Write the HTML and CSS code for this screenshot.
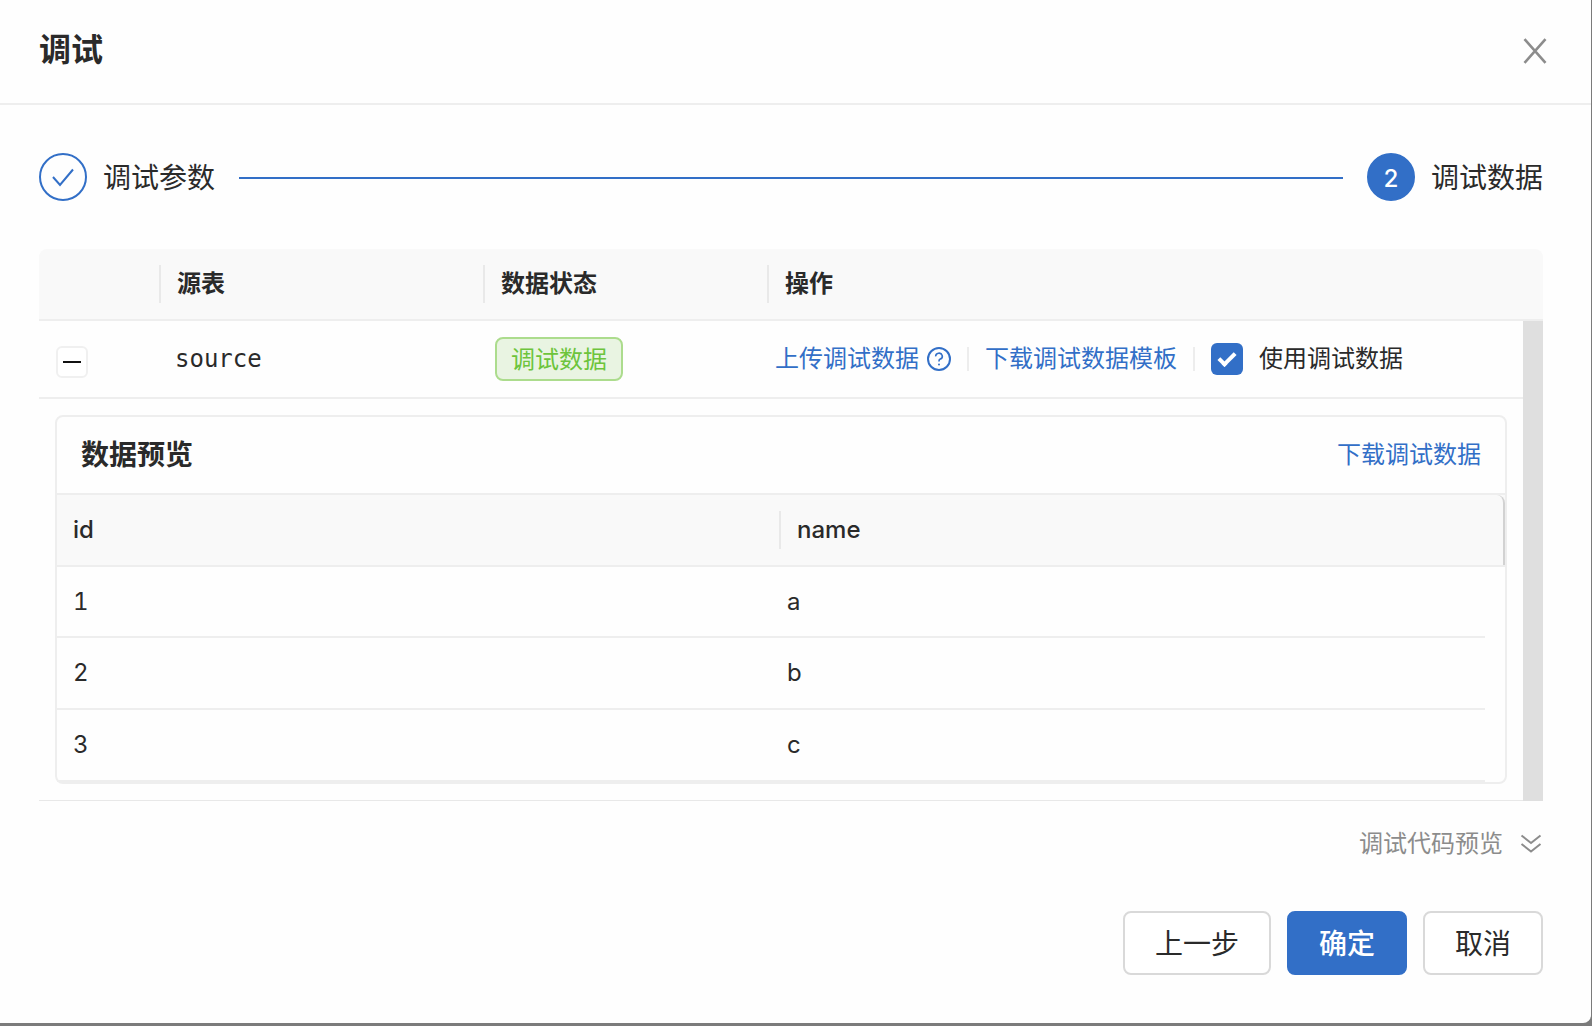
FILE: index.html
```html
<!DOCTYPE html>
<html lang="zh-CN">
<head>
<meta charset="utf-8">
<title>调试</title>
<link rel="stylesheet" href="styles.css">
</head>
<body>
<main class="dialog" role="dialog" aria-labelledby="dialog-title">
  <header class="dialog-header">
    <h1 class="dialog-title" id="dialog-title">调试</h1>
    <button class="icon-button" type="button" aria-label="关闭">
      <svg width="24" height="26" viewBox="0 0 24 26" fill="none" stroke="currentColor" stroke-width="2.6"><path d="M1.5 1.2 22.5 24.8M22.5 1.2 1.5 24.8"/></svg>
    </button>
  </header>

  <div class="dialog-body">
    <ol class="steps">
      <li class="step">
        <span class="step-icon step-icon-done">
          <svg width="22" height="20" viewBox="0 0 22 20" fill="none" stroke="currentColor" stroke-width="2"><path d="M1 10 8 18 21 2.5"/></svg>
        </span>
        <span class="step-title">调试参数</span>
      </li>
      <li class="step-line" aria-hidden="true"></li>
      <li class="step" aria-current="step">
        <span class="step-icon step-icon-current">2</span>
        <span class="step-title">调试数据</span>
      </li>
    </ol>

    <table class="sources">
      <thead>
        <tr class="sources-head">
          <th></th>
          <th>源表</th>
          <th>数据状态</th>
          <th>操作</th>
        </tr>
      </thead>
      <tbody>
        <tr class="source-row">
          <td class="cell-expand"><button class="collapse" type="button" aria-label="收起"></button></td>
          <td class="cell-name">source</td>
          <td><span class="tag">调试数据</span></td>
          <td>
            <div class="actions">
              <a class="link upload" href="#">上传调试数据
                <svg width="24" height="24" viewBox="0 0 24 24" fill="none" stroke="currentColor" stroke-width="2"><circle cx="12" cy="12" r="11"/><path d="M8.7 9.4a3.3 3.1 0 1 1 4.6 2.7q-1.3.6-1.3 1.8v.7" stroke-width="1.6"/><circle cx="12" cy="17.4" r="1" fill="currentColor" stroke="none"/></svg>
              </a>
              <span class="divider"></span>
              <a class="link" href="#">下载调试数据模板</a>
              <span class="divider"></span>
              <label class="check"><input class="check-box" type="checkbox" checked>使用调试数据</label>
            </div>
          </td>
        </tr>
        <tr class="expanded-row">
          <td colspan="4">
            <section class="card">
              <div class="card-header">
                <h2 class="card-title">数据预览</h2>
                <a class="link" href="#">下载调试数据</a>
              </div>
              <table class="preview">
                <thead><tr><th>id</th><th>name</th></tr></thead>
                <tbody>
                  <tr><td>1</td><td>a</td></tr>
                  <tr><td>2</td><td>b</td></tr>
                  <tr><td>3</td><td>c</td></tr>
                </tbody>
              </table>
            </section>
          </td>
        </tr>
      </tbody>
    </table>

    <button class="code-toggle" type="button">调试代码预览
      <svg width="24" height="20" viewBox="0 0 24 20" fill="none" stroke="currentColor" stroke-width="2"><path d="M2.5 1.5 12 9 21.5 1.5M2.5 10 12 17.5 21.5 10"/></svg>
    </button>
  </div>

  <footer class="dialog-footer">
    <button class="button" type="button">上一步</button>
    <button class="button button-primary" type="button">确定</button>
    <button class="button" type="button">取消</button>
  </footer>
</main>
</body>
</html>
```
FILE: styles.css
```css
:root {
  --blue: #326fc7;
  --text: #2a2a2a;
  --muted: #8c8c8c;
  --line: #eeeeee;
  --head: #f9f9f9;
}

* { box-sizing: border-box; }

body {
  margin: 0;
  background: #7b7b7b;
  color: var(--text);
  font: 24px/36px Inter, "Noto Sans CJK SC", sans-serif;
  font-variant-numeric: tabular-nums;
}

h1, h2, ol { margin: 0; padding: 0; }
button { font: inherit; color: inherit; cursor: pointer; }
svg { display: block; flex: none; }

.dialog {
  margin: 0 1px 3px 0;
  min-height: calc(100vh - 3px);
  background: #fefefe;
  border-bottom-right-radius: 8px;
}

.dialog-header {
  display: flex;
  align-items: center;
  justify-content: space-between;
  padding: 26px 44px 29px 39px;
  border-bottom: 2px solid var(--line);
}

.dialog-title {
  font-size: 32px;
  line-height: 48px;
  font-weight: 600;
}

.icon-button {
  padding: 2px 0 0;
  border: 0;
  background: none;
  color: var(--muted);
}

.dialog-body {
  display: flex;
  flex-direction: column;
  padding: 48px 48px 0 39px;
}

.steps {
  display: flex;
  align-items: center;
  gap: 24px;
  margin-bottom: 48px;
  list-style: none;
  font-size: 28px;
}

.step {
  display: flex;
  align-items: center;
  gap: 16px;
}

.step-icon {
  display: flex;
  align-items: center;
  justify-content: center;
  width: 48px;
  height: 48px;
  border: 2px solid var(--blue);
  border-radius: 50%;
  font-size: 24px;
}

.step-icon-done { color: var(--blue); }

.step-icon-current {
  padding-top: 4px;
  background: var(--blue);
  color: #fff;
  font-weight: 500;
}

.step-title { padding-top: 2px; }

.step-line {
  flex: 1;
  height: 2px;
  margin-top: 2px;
  background: var(--blue);
}

.sources, .sources > thead, .sources > tbody,
.preview, .preview thead, .preview tbody { display: block; }

th, td { padding: 0; text-align: left; }

.sources-head {
  display: grid;
  grid-template-columns: 122px 324px 284px 1fr;
  height: 72px;
  background: var(--head);
  border-bottom: 2px solid var(--line);
  border-radius: 8px 8px 0 0;
}

.sources-head th, .preview th {
  display: flex;
  align-items: center;
  justify-content: space-between;
  padding-left: 16px;
}

.sources-head th { font-weight: 600; }
.preview th { font-weight: 500; }

.sources-head th:not(:last-child)::after,
.preview th:not(:last-child)::after {
  content: "";
  width: 2px;
  height: 38px;
  margin-left: auto;
  background: #e9e9e9;
}

.sources > tbody { border-right: 20px solid #dfdfdf; }

.source-row {
  display: grid;
  grid-template-columns: 120px 320px 280px 1fr;
  align-items: center;
  height: 78px;
  border-bottom: 2px solid var(--line);
}

.source-row td { padding-left: 16px; }
.source-row .cell-expand { padding: 6px 0 0 17px; }
.cell-name { font-family: "DejaVu Sans Mono", monospace; }

.collapse {
  display: flex;
  align-items: center;
  justify-content: center;
  width: 32px;
  height: 32px;
  padding: 0;
  border: 2px solid #f0f0f0;
  border-radius: 6px;
  background: #fff;
}

.collapse::before {
  content: "";
  width: 18px;
  height: 2px;
  background: #111;
}

.tag {
  display: block;
  width: max-content;
  padding: 3px 14px 1px;
  border: 2px solid #acdc8d;
  border-radius: 8px;
  background: #e9f4e2;
  color: #6dc43c;
}

.actions {
  display: flex;
  align-items: center;
  gap: 16px;
  white-space: nowrap;
}

.link { color: var(--blue); text-decoration: none; }
.upload { display: flex; align-items: center; gap: 8px; }

.divider {
  width: 2px;
  height: 24px;
  background: #ededed;
}

.check {
  display: flex;
  align-items: center;
  gap: 16px;
}

.check-box {
  appearance: none;
  display: grid;
  place-items: center;
  width: 32px;
  height: 32px;
  margin: 0;
  border-radius: 6px;
  background: var(--blue);
}

.check-box:checked::before {
  content: "";
  width: 6px;
  height: 13px;
  margin-bottom: 4px;
  border: solid #fff;
  border-width: 0 4px 4px 0;
  transform: rotate(45deg);
}

.expanded-row { display: block; }

.expanded-row > td {
  display: block;
  padding: 16px;
  border-bottom: 1px solid #e8e8e8;
}

.card {
  border: 2px solid var(--line);
  border-radius: 8px;
}

.card-header {
  display: flex;
  align-items: center;
  justify-content: space-between;
  padding: 20px 24px;
  border-bottom: 2px solid var(--line);
}

.card-title {
  font-size: 28px;
  line-height: 36px;
  font-weight: 600;
}

.preview tr {
  display: grid;
  grid-template-columns: 1fr 1fr;
  align-items: center;
  height: 72px;
  border-bottom: 2px solid var(--line);
}

.preview thead { background: var(--head); }
.preview tbody tr:first-child { height: 71px; }

.preview th:last-child {
  height: 70px;
  border-right: 2px solid #d2d2d2;
  border-top-right-radius: 8px;
}

.preview tbody { padding-right: 20px; }
.preview td { padding-left: 16px; }

.code-toggle {
  display: flex;
  align-items: center;
  align-self: flex-end;
  gap: 16px;
  margin-top: 25px;
  padding: 0;
  border: 0;
  background: none;
  color: var(--muted);
}

.dialog-footer {
  display: flex;
  justify-content: flex-end;
  gap: 16px;
  padding: 49px 48px 48px;
}

.button {
  height: 64px;
  padding: 2px 30px 0;
  border: 2px solid #d9d9d9;
  border-radius: 8px;
  background: #fff;
  font-size: 28px;
}

.button-primary {
  border-color: var(--blue);
  background: var(--blue);
  color: #fff;
  font-weight: 500;
}
```
